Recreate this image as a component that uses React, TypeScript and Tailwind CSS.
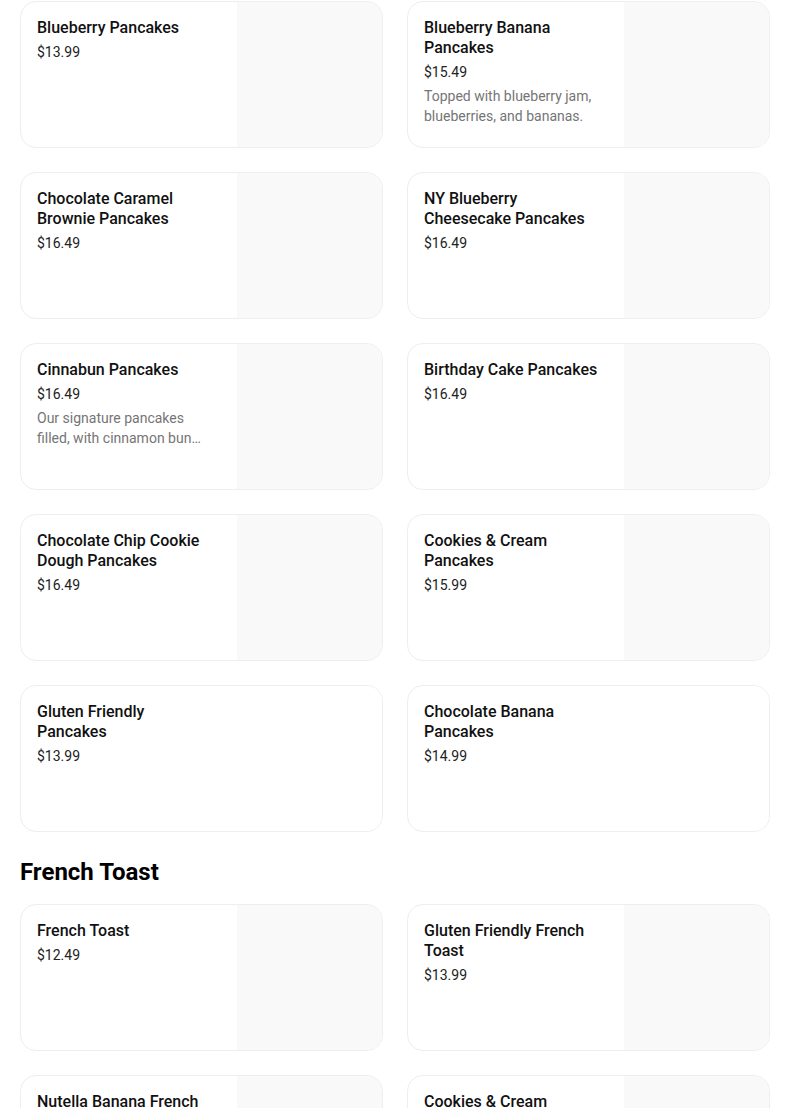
import React from 'react';

interface Item {
  name: string;
  price: string;
  desc?: string;
  image?: boolean;
}

const pancakes: Item[] = [
  { name: 'Blueberry Pancakes', price: '$13.99', image: true },
  { name: 'Blueberry Banana Pancakes', price: '$15.49', desc: 'Topped with blueberry jam, blueberries, and bananas.', image: true },
  { name: 'Chocolate Caramel Brownie Pancakes', price: '$16.49', image: true },
  { name: 'NY Blueberry Cheesecake Pancakes', price: '$16.49', image: true },
  { name: 'Cinnabun Pancakes', price: '$16.49', desc: 'Our signature pancakes filled, with cinnamon bun swirl and topped with cream cheese icing.', image: true },
  { name: 'Birthday Cake Pancakes', price: '$16.49', image: true },
  { name: 'Chocolate Chip Cookie Dough Pancakes', price: '$16.49', image: true },
  { name: 'Cookies & Cream Pancakes', price: '$15.99', image: true },
  { name: 'Gluten Friendly Pancakes', price: '$13.99' },
  { name: 'Chocolate Banana Pancakes', price: '$14.99' },
];

const frenchToast: Item[] = [
  { name: 'French Toast', price: '$12.49', image: true },
  { name: 'Gluten Friendly French Toast', price: '$13.99', image: true },
  { name: 'Nutella Banana French Toast', price: '$14.49', image: true },
  { name: 'Cookies & Cream French Toast', price: '$14.99', image: true },
];

const MenuCard = ({ item }: { item: Item }) => (
  <div className="flex h-[147px] overflow-hidden rounded-2xl border border-[#eeeeee] bg-white">
    <div className="w-[216px] shrink-0 pl-4 pt-4">
      <div className="w-[175px]">
        <div className="text-base font-medium leading-5 text-[#111111]">{item.name}</div>
        <div className="mt-1 text-sm leading-5 text-[#222222]">{item.price}</div>
        {item.desc && (
          <div className="mt-1 line-clamp-2 text-sm leading-5 text-[#757575]">{item.desc}</div>
        )}
      </div>
    </div>
    <div className={`flex-1 ${item.image ? 'bg-[#f9f9f9]' : 'bg-white'}`}></div>
  </div>
);

export default function App() {
  return (
    <div className="w-[770px] bg-white pl-5 pt-px" style={{ fontFamily: 'Roboto, "Noto Sans", sans-serif' }}>
      <div className="grid grid-cols-2 gap-6">
        {pancakes.map(item => <MenuCard key={item.name} item={item} />)}
      </div>
      <h2 className="mt-6 mb-4 text-2xl font-bold leading-8 text-black">French Toast</h2>
      <div className="grid grid-cols-2 gap-6">
        {frenchToast.map(item => <MenuCard key={item.name} item={item} />)}
      </div>
    </div>
  );
}
